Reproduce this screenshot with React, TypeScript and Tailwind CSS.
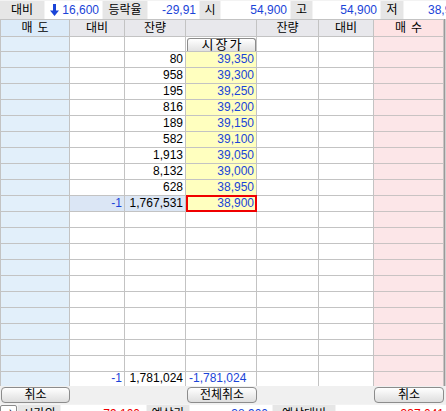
import React from "react";

const W = ["w-[70px] border-l", "w-[55px]", "w-[61px]", "w-[71px]", "w-[62px]", "w-[55px]", "w-[70px]"];

const prices = [
  ["80", "39,350"],
  ["958", "39,300"],
  ["195", "39,250"],
  ["816", "39,200"],
  ["189", "39,150"],
  ["582", "39,100"],
  ["1,913", "39,050"],
  ["8,132", "39,000"],
  ["628", "38,950"],
];

const font = { fontFamily: '"Liberation Sans","Noto Sans CJK KR",sans-serif' };

function Label({ w, children }: { w: string; children: React.ReactNode }) {
  return (
    <div className={`${w} h-[18px] bg-[#e6e6e6] flex items-center justify-center text-[12px] text-black shrink-0`}>
      {children}
    </div>
  );
}
function Val({ w, children, cls = "" }: { w: string; children: React.ReactNode; cls?: string }) {
  return (
    <div className={`${w} h-[18px] bg-white flex items-center justify-end pr-[3px] text-[12px] text-[#1a44d8] shrink-0 overflow-hidden whitespace-nowrap ${cls}`}>
      {children}
    </div>
  );
}

function EmptyRow({ h = "h-[16px]" }: { h?: string }) {
  return (
    <div className={`flex ${h}`}>
      <div className={`${W[0]} border-r border-b border-[#c3c3c3] bg-[#e2effa]`} />
      <div className={`${W[1]} border-r border-b border-[#c3c3c3] bg-white`} />
      <div className={`${W[2]} border-r border-b border-[#c3c3c3] bg-white`} />
      <div className={`${W[3]} border-r border-b border-[#c3c3c3] bg-white`} />
      <div className={`${W[4]} border-r border-b border-[#c3c3c3] bg-white`} />
      <div className={`${W[5]} border-r border-b border-[#c3c3c3] bg-white`} />
      <div className={`${W[6]} border-r border-b border-[#c9c3c3] bg-[#fce6e8]`} />
    </div>
  );
}

function PriceRow({ qty, price, last }: { qty: string; price: string; last?: boolean }) {
  return (
    <div className="flex h-[16px] text-[12px] leading-[15px]">
      <div className={`${W[0]} border-r border-b border-[#c3c3c3] bg-[#e2effa]`} />
      <div className={`${W[1]} border-r border-b border-[#c3c3c3] ${last ? "bg-[#dbe6f5] text-[#1a44d8]" : "bg-white"} text-right pr-[2px]`}>
        {last ? "-1" : ""}
      </div>
      <div className={`${W[2]} border-r border-b border-[#c3c3c3] ${last ? "bg-[#dbe6f5]" : "bg-white"} text-right pr-[2px] text-black`}>
        {qty}
      </div>
      <div className={`${W[3]} border-r border-b border-[#c3c3c3] bg-[#ffffbf] text-right pr-[2px] text-[#1a44d8] relative`}>
        {price}
        {last && <div className="absolute left-[0px] top-[-1px] right-[-1px] bottom-[-1px] border-2 border-[#f00000]" />}
      </div>
      <div className={`${W[4]} border-r border-b border-[#c3c3c3] bg-white`} />
      <div className={`${W[5]} border-r border-b border-[#c3c3c3] bg-white`} />
      <div className={`${W[6]} border-r border-b border-[#c9c3c3] bg-[#fce6e8]`} />
    </div>
  );
}

function Btn({ children, w }: { children: React.ReactNode; w: string }) {
  return (
    <div className={`${w} h-[16px] rounded-[4px] border border-[#8c8c8c] bg-gradient-to-b from-white to-[#dedede] flex items-center justify-center text-[12px] text-black`}>
      {children}
    </div>
  );
}

export default function App() {
  return (
    <div className="w-[446px] h-[411px] overflow-hidden bg-[#f0f0f0] select-none" style={font}>
      {/* top bar */}
      <div className="flex h-[19px] gap-[1px] pt-[1px] bg-[#f3f3f3]">
        <Label w="w-[44px]">대비</Label>
        <Val w="w-[57px]">
          <svg width="9" height="12" viewBox="0 0 9 12" className="mr-[3px]">
            <path d="M3 0h3v6.5h3L4.5 12 0 6.5h3z" fill="#1a44d8" />
          </svg>
          16,600
        </Val>
        <Label w="w-[44px]">등락율</Label>
        <Val w="w-[51px]">-29,91</Val>
        <Label w="w-[20px]">시</Label>
        <Val w="w-[69px]">54,900</Val>
        <Label w="w-[21px]">고</Label>
        <Val w="w-[67px]">54,900</Val>
        <Label w="w-[22px]">저</Label>
        <Val w="w-[43px]" cls="justify-start pl-[24px]">38,900</Val>
      </div>

      <div className="flex">
        <div className="w-[444px] border-t border-[#c3c3c3]">
          {/* header */}
          <div className="flex h-[17px] text-[12px] leading-[16px] text-black">
            <div className={`${W[0]} border-r border-b border-[#c3c3c3] bg-[#dcebf9] text-center tracking-[5px] pl-[5px]`}>매도</div>
            <div className={`${W[1]} border-r border-b border-[#c3c3c3] bg-[#e8e8ec] text-center`}>대비</div>
            <div className={`${W[2]} border-r border-b border-[#c3c3c3] bg-[#e8e8ec] text-center`}>잔량</div>
            <div className={`${W[3]} border-r border-b border-[#c3c3c3] bg-[#e8e8ec]`} />
            <div className={`${W[4]} border-r border-b border-[#c3c3c3] bg-[#e8e8ec] text-center`}>잔량</div>
            <div className={`${W[5]} border-r border-b border-[#c3c3c3] bg-[#e8e8ec] text-center`}>대비</div>
            <div className={`${W[6]} border-r border-b border-[#c9c3c3] bg-[#fde3e4] text-center tracking-[5px] pl-[5px]`}>매수</div>
          </div>
          {/* row 1 with 시장가 button */}
          <div className="flex h-[15px]">
            <div className={`${W[0]} border-r border-b border-[#c3c3c3] bg-[#e2effa]`} />
            <div className={`${W[1]} border-r border-b border-[#c3c3c3] bg-white`} />
            <div className={`${W[2]} border-r border-b border-[#c3c3c3] bg-white`} />
            <div className={`${W[3]} border-r border-b border-[#c3c3c3] bg-white pl-[1px] pt-[1px]`}>
              <div className="h-full rounded-t-[3px] border border-b-0 border-[#8c8c8c] bg-gradient-to-b from-white to-[#e2e2e2] flex items-center justify-center text-[13px] leading-[12px] tracking-[2px] pl-[2px] text-black">
                시장가
              </div>
            </div>
            <div className={`${W[4]} border-r border-b border-[#c3c3c3] bg-white`} />
            <div className={`${W[5]} border-r border-b border-[#c3c3c3] bg-white`} />
            <div className={`${W[6]} border-r border-b border-[#c9c3c3] bg-[#fce6e8]`} />
          </div>
          {prices.map(([q, p]) => (
            <PriceRow key={p} qty={q} price={p} />
          ))}
          <PriceRow qty="1,767,531" price="38,900" last />
          {Array.from({ length: 10 }).map((_, i) => (
            <EmptyRow key={i} />
          ))}
          {/* summary */}
          <div className="flex h-[14px] text-[12px] leading-[13px]">
            <div className={`${W[0]} border-r border-[#c3c3c3] bg-[#e2effa]`} />
            <div className={`${W[1]} border-r border-[#c3c3c3] bg-white text-right pr-[2px] text-[#1a44d8]`}>-1</div>
            <div className={`${W[2]} border-r border-[#c3c3c3] bg-white text-right pr-[2px] text-black`}>1,781,024</div>
            <div className={`${W[3]} border-r border-[#c3c3c3] bg-white pl-[3px] text-[#1a44d8] whitespace-nowrap`}>-1,781,024</div>
            <div className={`${W[4]} border-r border-[#c3c3c3] bg-white`} />
            <div className={`${W[5]} border-r border-[#c3c3c3] bg-white`} />
            <div className={`${W[6]} border-r border-[#c9c3c3] bg-[#fce6e8]`} />
          </div>
        </div>
        <div className="w-[2px] bg-[#d0d0d0] border-l border-[#9a9a9a]" />
      </div>

      {/* buttons */}
      <div className="flex h-[18px] items-center bg-[#f0f0f0] pl-[1px]">
        <Btn w="w-[69px]">취소</Btn>
        <div className="w-[117px]" />
        <Btn w="w-[70px]">전체취소</Btn>
        <div className="w-[117px]" />
        <Btn w="w-[70px]">취소</Btn>
      </div>

      {/* bottom partial row */}
      <div className="flex h-[18px] gap-[1px] text-[12px] leading-[18px] bg-[#f3f3f3] pt-[1px]">
        <div className="w-[17px] h-[17px] border border-[#8c8c8c] rounded-[2px] bg-white flex items-center justify-center text-[11px]">⇒</div>
        <div className="w-[42px] bg-[#e6e6e6] text-center text-black">시간외</div>
        <div className="w-[85px] bg-white text-right pr-[6px] text-[#f00000]">79,100</div>
        <div className="w-[42px] bg-[#e6e6e6] text-center text-black">예상가</div>
        <div className="w-[82px] bg-white text-right pr-[4px] text-[#1a44d8]">38,900</div>
        <div className="w-[62px] bg-[#e6e6e6] text-center text-black">예상대비</div>
        <div className="flex-1 bg-white text-right pr-[2px] text-[#f00000]">337,041</div>
      </div>
    </div>
  );
}
